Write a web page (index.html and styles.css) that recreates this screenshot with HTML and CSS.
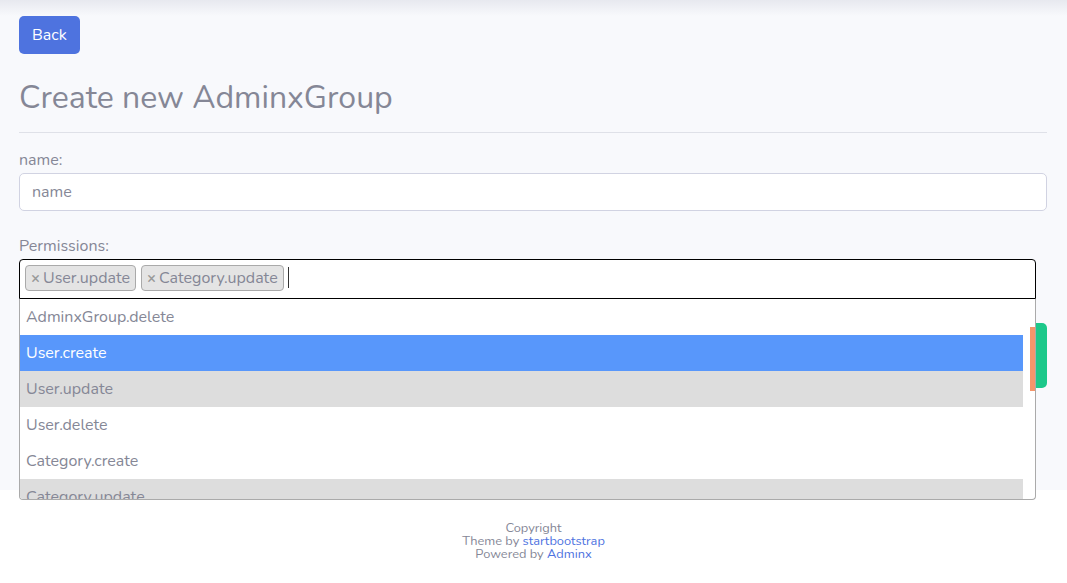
FILE: index.html
```html
<!DOCTYPE html>
<html lang="en">
<head>
<meta charset="utf-8">
<title>Create new AdminxGroup</title>
<link rel="stylesheet" href="styles.css">
</head>
<body>
<div class="page">
  <div class="content">
    <a class="btn-back" href="#">Back</a>
    <h2 class="title">Create new AdminxGroup</h2>
    <hr class="divider">
    <form class="form">
      <div class="field field-name">
        <label class="label" for="name">name:</label>
        <input class="input" id="name" placeholder="name">
      </div>
      <div class="field field-perms">
        <label class="label">Permissions:</label>
        <div class="select2">
          <div class="selection">
            <span class="choice"><span class="choice-x">×</span>User.update</span>
            <span class="choice"><span class="choice-x">×</span>Category.update</span>
            <span class="caret"></span>
          </div>
          <div class="dropdown">
            <ul class="results">
              <li class="opt">AdminxGroup.delete</li>
              <li class="opt opt-hl">User.create</li>
              <li class="opt opt-sel">User.update</li>
              <li class="opt">User.delete</li>
              <li class="opt">Category.create</li>
              <li class="opt opt-sel">Category.update</li>
              <li class="opt">Category.delete</li>
            </ul>
            <span class="thumb"></span>
          </div>
          <span class="side-btn"></span>
        </div>
      </div>
    </form>
  </div>
</div>
<footer class="footer">
  <div>Copyright</div>
  <div>Theme by <a href="#">startbootstrap</a></div>
  <div>Powered by <a href="#">Adminx</a></div>
</footer>
</body>
</html>
```
FILE: styles.css
```css
* { box-sizing: border-box; }
html, body { margin: 0; padding: 0; }
body {
  font-family: "Nunito", "Lato", "Noto Sans", sans-serif;
  color: #858796;
  background: #fff;
  font-size: 16px;
  line-height: 1.5;
}
.page {
  height: 490px;
  background: #f8f9fc;
  background-image: linear-gradient(to bottom, rgba(200, 202, 215, 0.35), rgba(248, 249, 252, 0) 16px);
}
.content {
  padding: 16px 20px 0 19px;
}
.btn-back {
  display: inline-block;
  background: #4e73df;
  color: #fff;
  text-decoration: none;
  border-radius: 5px;
  height: 38px;
  line-height: 38px;
  padding: 0 13px;
  font-size: 16px;
}
.title {
  margin: 25px 0 0;
  font-size: 32px;
  font-weight: 400;
  line-height: 38px;
  color: #858796;
}
.divider {
  margin: 15px 0 0;
  border: 0;
  border-top: 1px solid #dfe1e8;
}
.form { margin-top: 15px; }
.field-name { margin-bottom: 23px; }
.label {
  display: block;
  line-height: 24px;
  margin-bottom: 1px;
}
.input {
  display: block;
  width: 100%;
  height: 38px;
  border: 1px solid #d1d3e2;
  border-radius: 5px;
  background: #fff;
  padding: 0 12px;
  font: inherit;
  color: #6e707e;
}
.input::placeholder { color: #858796; }
.select2 {
  position: relative;
  width: 1017px;
}
.selection {
  height: 40px;
  border: 1px solid #000;
  border-radius: 4px 4px 0 0;
  background: #fff;
  display: flex;
  align-items: flex-start;
  padding: 5px 0 0 5px;
  gap: 5px;
}
.choice {
  display: inline-block;
  height: 26px;
  line-height: 24px;
  background: #e4e4e4;
  border: 1px solid #aaa;
  border-radius: 4px;
  padding: 0 5px;
  color: #858796;
}
.choice-x {
  color: #999;
  font-weight: 700;
  font-size: 15px;
  margin-right: 3px;
}
.caret {
  width: 1px;
  height: 21px;
  background: #333;
  margin: 2px 0 0 -1px;
}
.dropdown {
  position: absolute;
  left: 0;
  top: 40px;
  width: 1017px;
  height: 201px;
  background: #fff;
  border: 1px solid #aaa;
  border-top: 0;
  border-radius: 0 0 4px 4px;
  overflow: hidden;
  z-index: 2;
}
.results {
  list-style: none;
  margin: 0;
  padding: 0;
  width: 1003px;
}
.opt {
  height: 36px;
  padding: 6px 6px;
  line-height: 24px;
  color: #858796;
}
.opt-hl { background: #5897fb; color: #fff; }
.opt-sel { background: #ddd; }
.thumb {
  position: absolute;
  left: 1010px;
  top: 28px;
  width: 6px;
  height: 64px;
  background: #f4956b;
}
.side-btn {
  position: absolute;
  left: 1016px;
  top: 64px;
  width: 12px;
  height: 65px;
  background: #1cc88a;
  border-radius: 0 5px 5px 0;
  z-index: 1;
}
.footer {
  padding: 32px 0;
  text-align: center;
  font-size: 12.8px;
  line-height: 1;
  color: #858796;
}
.footer a { color: #4e73df; text-decoration: none; }
```
